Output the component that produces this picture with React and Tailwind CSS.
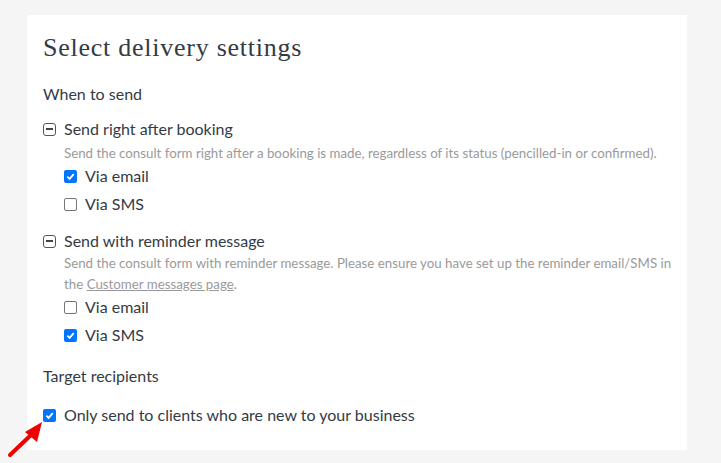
import React from 'react';

const Check = ({ checked }) => (
    checked ? (
        <span className="w-[13px] h-[13px] rounded-[2px] bg-[#0075ff] flex items-center justify-center shrink-0">
            <svg width="9" height="9" viewBox="0 0 10 10">
                <path d="M1.5 5.2 L4 7.6 L8.6 2.4" fill="none" stroke="white" strokeWidth="2" />
            </svg>
        </span>
    ) : (
        <span className="w-[13px] h-[13px] rounded-[2px] border border-[#767676] bg-white shrink-0" />
    )
);

const MinusBox = () => (
    <span className="w-[13px] h-[13px] rounded-[3px] border border-[#555] flex items-center justify-center shrink-0">
        <span className="w-[7px] h-[1.5px] bg-[#444]" />
    </span>
);

const Option = ({ checked, label }) => (
    <div className="flex items-center gap-[8px] h-[28px] text-[16px] text-[#333b45]">
        <Check checked={checked} />
        <span>{label}</span>
    </div>
);

export default function App() {
    return (
        <div className="w-[721px] h-[463px] bg-[#f4f5f4] pt-[15px] pl-[27px] relative overflow-hidden" style={{ fontFamily: 'Lato, sans-serif' }}>
            <div className="w-[660px] h-[435px] bg-white pl-[16px] pt-[17px]">
                <h1 className="text-[26px] leading-[32px] tracking-[0.75px] text-[#333b45] font-normal" style={{ fontFamily: '"Liberation Serif", serif' }}>
                    Select delivery settings
                </h1>
                <p className="mt-[18px] text-[16px] leading-[24px] text-[#333b45]">When to send</p>

                <div className="mt-[11px]">
                    <div className="flex items-center gap-[8px] h-[24px] text-[16px] text-[#333b45]">
                        <MinusBox />
                        <span>Send right after booking</span>
                    </div>
                    <div className="pl-[21px]">
                        <p className="text-[13.3px] leading-[20px] text-[#9a9a9a] mt-[2px]">
                            Send the consult form right after a booking is made, regardless of its status (pencilled-in or confirmed).
                        </p>
                        <div className="-mt-[1px]">
                            <Option checked label="Via email" />
                            <Option label="Via SMS" />
                        </div>
                    </div>
                </div>

                <div className="mt-[11px]">
                    <div className="flex items-center gap-[8px] h-[24px] text-[16px] text-[#333b45]">
                        <MinusBox />
                        <span>Send with reminder message</span>
                    </div>
                    <div className="pl-[21px]">
                        <p className="text-[13.3px] leading-[21px] text-[#9a9a9a] w-[612px]">
                            Send the consult form with reminder message. Please ensure you have set up the reminder email/SMS in the <span className="underline">Customer messages page</span>.
                        </p>
                        <div className="-mt-[2px]">
                            <Option label="Via email" />
                            <Option checked label="Via SMS" />
                        </div>
                    </div>
                </div>

                <p className="mt-[15px] text-[16px] leading-[24px] text-[#333b45]">Target recipients</p>
                <div className="mt-[13px] flex items-center gap-[8px] h-[28px] text-[16px] text-[#333b45]">
                    <Check checked />
                    <span>Only send to clients who are new to your business</span>
                </div>
            </div>

            <svg className="absolute left-0 top-[410px]" width="60" height="53" viewBox="0 0 60 53">
                <line x1="10" y1="45" x2="31" y2="25" stroke="#ee0000" strokeWidth="4" strokeLinecap="round" />
                <path d="M42 12 L25 22 L37 32 Z" fill="#ee0000" />
            </svg>
        </div>
    );
}
